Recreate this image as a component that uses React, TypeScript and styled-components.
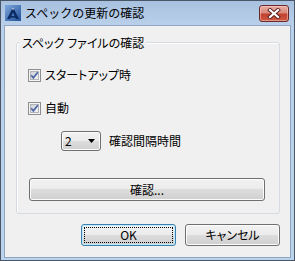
import React from "react";
import styled, { createGlobalStyle, css } from "styled-components";

const GlobalStyle = createGlobalStyle`
  html, body {
    margin: 0;
    padding: 0;
    background: #ffffff;
  }
  body {
    font-family: "Noto Sans CJK JP", "Noto Sans", sans-serif;
    font-size: 12px;
    color: #000;
  }
`;

const Window = styled.div`
  box-sizing: border-box;
  width: 295px;
  height: 261px;
  display: flex;
  flex-direction: column;
  padding: 0 3px 2px;
  border: 1px solid #4a5666;
  background: linear-gradient(to bottom, #a7c1e0 0px, #bad0ea 24px, #bcd3ec 100%);
`;

const TitleBar = styled.div`
  height: 24px;
  display: flex;
  align-items: center;
  flex-shrink: 0;
`;

const TitleText = styled.span`
  margin-left: 4px;
  font-size: 12px;
  line-height: 16px;
  color: #000;
`;

const CloseButton = styled.div`
  box-sizing: border-box;
  margin-left: auto;
  margin-right: 2px;
  align-self: flex-start;
  margin-top: 4px;
  width: 30px;
  height: 17px;
  display: flex;
  align-items: center;
  justify-content: center;
  border: 1px solid #6b2a2a;
  border-radius: 3px;
  background: linear-gradient(to bottom, #e9aca2 0%, #d98a7c 45%, #c2412f 55%, #cd5b44 100%);
  box-shadow: inset 0 0 0 1px rgba(255, 210, 200, 0.5);
`;

const Client = styled.div`
  flex: 1;
  display: flex;
  flex-direction: column;
  background: #f0f0f0;
  border: 1px solid #8fa6c2;
  font-feature-settings: "palt";
`;

const GroupBox = styled.div`
  position: relative;
  box-sizing: border-box;
  width: 264px;
  margin: 16px 0 0 11px;
  padding: 24px 0 12px 11px;
  display: flex;
  flex-direction: column;
  border: 1px solid #d5dbe0;
  border-radius: 3px;
  box-shadow: inset 1px 1px 0 #ffffff;
`;

const Caption = styled.span`
  position: absolute;
  top: -8px;
  left: 3px;
  padding: 0 2px;
  line-height: 16px;
  background: #f0f0f0;
`;

const CheckRow = styled.label<{ $gapTop?: number }>`
  display: flex;
  align-items: center;
  gap: 4px;
  height: 16px;
  margin-top: ${(p) => p.$gapTop ?? 0}px;
  line-height: 16px;
`;

const ComboRow = styled.div`
  display: flex;
  align-items: center;
  gap: 8px;
  height: 20px;
  margin: 15px 0 0 33px;
  line-height: 16px;
`;

const buttonFace = css`
  box-sizing: border-box;
  display: flex;
  align-items: center;
  justify-content: center;
  border: 1px solid #707070;
  border-radius: 3px;
  background: linear-gradient(to bottom, #f2f2f2 0%, #ebebeb 50%, #dddddd 50%, #cfcfcf 100%);
  box-shadow: inset 0 0 0 1px #fcfcfc;
  font-size: 12px;
  line-height: 16px;
  color: #000;
`;

const Combo = styled.div`
  ${buttonFace}
  justify-content: space-between;
  width: 40px;
  height: 20px;
  padding: 0 5px 0 3px;
`;

const WideButton = styled.div`
  ${buttonFace}
  width: 236px;
  height: 23px;
  margin: 27px 0 0 1px;
`;

const Footer = styled.div`
  display: flex;
  justify-content: flex-end;
  gap: 9px;
  width: 264px;
  margin: 10px 0 0 11px;
`;

const DialogButton = styled.div<{ $default?: boolean }>`
  ${buttonFace}
  position: relative;
  width: 95px;
  height: 22px;
  ${(p) =>
    p.$default &&
    css`
      border-color: #3c7fb1;
      box-shadow: inset 0 0 0 1px #bfeafd;
      &::after {
        content: "";
        position: absolute;
        inset: 2px;
        border: 1px dotted #000;
      }
    `}
`;

const AppIcon = () => (
  <svg width="16" height="16" viewBox="0 0 16 16" style={{ marginLeft: 1, flexShrink: 0 }}>
    <defs>
      <linearGradient id="acad" x1="0" y1="0" x2="1" y2="1">
        <stop offset="0" stopColor="#7fa8dc" />
        <stop offset="1" stopColor="#1f4f98" />
      </linearGradient>
    </defs>
    <rect x="0" y="0" width="16" height="16" fill="url(#acad)" />
    <polygon points="8,2 2,14 5,14 8,7.5 11,14 14,14" fill="#0c2a63" />
    <polygon points="8,2 7,4 8,5 9,4" fill="#c7dbf3" />
    <rect x="5" y="11" width="6" height="1.6" fill="#0c2a63" />
  </svg>
);

const CloseGlyph = () => (
  <svg width="14" height="11" viewBox="0 0 14 11">
    <path d="M3 2 L11 9 M11 2 L3 9" stroke="#5a1f1f" strokeWidth="4" strokeLinecap="square" />
    <path d="M3 2 L11 9 M11 2 L3 9" stroke="#ffffff" strokeWidth="2.2" strokeLinecap="square" />
  </svg>
);

const CheckBox = ({ id }: { id: string }) => (
  <svg width="13" height="13" viewBox="0 0 13 13" style={{ flexShrink: 0 }}>
    <defs>
      <linearGradient id={id} x1="0" y1="0" x2="1" y2="1">
        <stop offset="0" stopColor="#cbcfd5" />
        <stop offset="1" stopColor="#f6f6f6" />
      </linearGradient>
    </defs>
    <rect x="0.5" y="0.5" width="12" height="12" fill="#f4f4f4" stroke="#8e8f8f" />
    <rect x="2.5" y="2.5" width="8" height="8" fill={`url(#${id})`} stroke="#b0b4b9" />
    <path d="M3.2 6.3 L5.3 8.8 L9.8 3.2" stroke="#4c66a4" strokeWidth="1.7" fill="none" />
  </svg>
);

const DropArrow = () => (
  <svg width="7" height="4" viewBox="0 0 7 4">
    <polygon points="0,0 7,0 3.5,4" fill="#000" />
  </svg>
);

export default function App() {
  return (
    <>
      <GlobalStyle />
      <Window>
        <TitleBar>
          <AppIcon />
          <TitleText>スペックの更新の確認</TitleText>
          <CloseButton>
            <CloseGlyph />
          </CloseButton>
        </TitleBar>
        <Client>
          <GroupBox>
            <Caption>スペック ファイルの確認</Caption>
            <CheckRow>
              <CheckBox id="chk1" />
              スタートアップ時
            </CheckRow>
            <CheckRow $gapTop={17}>
              <CheckBox id="chk2" />
              自動
            </CheckRow>
            <ComboRow>
              <Combo>
                <span>2</span>
                <DropArrow />
              </Combo>
              確認間隔時間
            </ComboRow>
            <WideButton>確認...</WideButton>
          </GroupBox>
          <Footer>
            <DialogButton $default>OK</DialogButton>
            <DialogButton>キャンセル</DialogButton>
          </Footer>
        </Client>
      </Window>
    </>
  );
}
